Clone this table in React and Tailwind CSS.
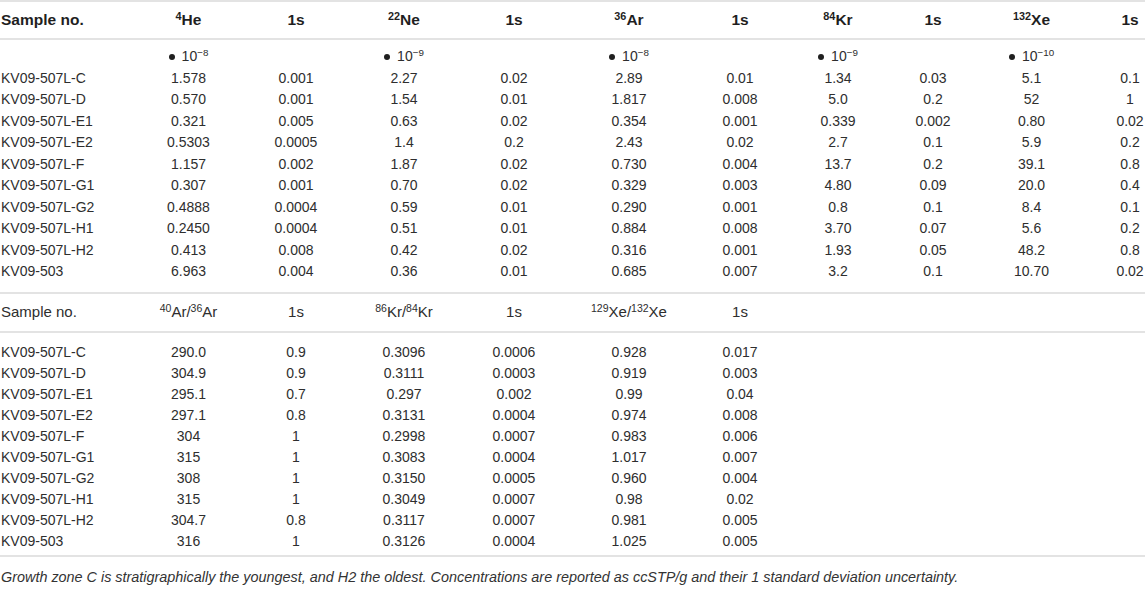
import React from 'react';

const grid = 'grid grid-cols-[135px_107px_108px_108px_112px_118px_104px_92px_98px_99px_98px]';

const gases = [
  { mass: '4', name: 'He', exp: '8' },
  { mass: '22', name: 'Ne', exp: '9' },
  { mass: '36', name: 'Ar', exp: '8' },
  { mass: '84', name: 'Kr', exp: '9' },
  { mass: '132', name: 'Xe', exp: '10' },
];

const concentrations = [
  ['KV09-507L-C', '1.578', '0.001', '2.27', '0.02', '2.89', '0.01', '1.34', '0.03', '5.1', '0.1'],
  ['KV09-507L-D', '0.570', '0.001', '1.54', '0.01', '1.817', '0.008', '5.0', '0.2', '52', '1'],
  ['KV09-507L-E1', '0.321', '0.005', '0.63', '0.02', '0.354', '0.001', '0.339', '0.002', '0.80', '0.02'],
  ['KV09-507L-E2', '0.5303', '0.0005', '1.4', '0.2', '2.43', '0.02', '2.7', '0.1', '5.9', '0.2'],
  ['KV09-507L-F', '1.157', '0.002', '1.87', '0.02', '0.730', '0.004', '13.7', '0.2', '39.1', '0.8'],
  ['KV09-507L-G1', '0.307', '0.001', '0.70', '0.02', '0.329', '0.003', '4.80', '0.09', '20.0', '0.4'],
  ['KV09-507L-G2', '0.4888', '0.0004', '0.59', '0.01', '0.290', '0.001', '0.8', '0.1', '8.4', '0.1'],
  ['KV09-507L-H1', '0.2450', '0.0004', '0.51', '0.01', '0.884', '0.008', '3.70', '0.07', '5.6', '0.2'],
  ['KV09-507L-H2', '0.413', '0.008', '0.42', '0.02', '0.316', '0.001', '1.93', '0.05', '48.2', '0.8'],
  ['KV09-503', '6.963', '0.004', '0.36', '0.01', '0.685', '0.007', '3.2', '0.1', '10.70', '0.02'],
];

const ratios = [
  ['KV09-507L-C', '290.0', '0.9', '0.3096', '0.0006', '0.928', '0.017'],
  ['KV09-507L-D', '304.9', '0.9', '0.3111', '0.0003', '0.919', '0.003'],
  ['KV09-507L-E1', '295.1', '0.7', '0.297', '0.002', '0.99', '0.04'],
  ['KV09-507L-E2', '297.1', '0.8', '0.3131', '0.0004', '0.974', '0.008'],
  ['KV09-507L-F', '304', '1', '0.2998', '0.0007', '0.983', '0.006'],
  ['KV09-507L-G1', '315', '1', '0.3083', '0.0004', '1.017', '0.007'],
  ['KV09-507L-G2', '308', '1', '0.3150', '0.0005', '0.960', '0.004'],
  ['KV09-507L-H1', '315', '1', '0.3049', '0.0007', '0.98', '0.02'],
  ['KV09-507L-H2', '304.7', '0.8', '0.3117', '0.0007', '0.981', '0.005'],
  ['KV09-503', '316', '1', '0.3126', '0.0004', '1.025', '0.005'],
];

// isotope label like ⁴He with a real superscript
function Iso({ mass, name }) {
  return (
    <span>
      <sup className="text-[0.7em] relative -top-[0.5em]">{mass}</sup>
      {name}
    </span>
  );
}

function DataRow({ cells, h }) {
  return (
    <div className={`${grid} ${h} items-center text-[14px]`}>
      {cells.map((c, i) => (
        <div key={i} className={i === 0 ? 'pl-px' : 'text-center'}>{c}</div>
      ))}
    </div>
  );
}

export default function App() {
  return (
    <div className="w-[1145px] h-[589px] overflow-hidden bg-white text-[#2e2e2e] font-['Liberation_Sans',Arial,sans-serif]">
      <div className="border-t-2 border-[#e3e3e3]" />

      {/* table 1 header */}
      <div className={`${grid} h-[36px] items-center text-[15.5px] font-bold text-[#1f1f1f]`}>
        <div className="pl-px">Sample no.</div>
        {gases.map(g => (
          <React.Fragment key={g.name}>
            <div className="text-center"><Iso mass={g.mass} name={g.name} /></div>
            <div className="text-center">1s</div>
          </React.Fragment>
        ))}
      </div>
      <div className="border-t-2 border-[#e3e3e3]" />

      <div className="pt-[6px] pb-[9px]">
        <div className={`${grid} h-[21.5px] items-center text-[14px]`}>
          <div />
          {gases.map(g => (
            <React.Fragment key={g.name}>
              <div className="text-center">
                <span className="inline-block w-[6px] h-[6px] rounded-full bg-[#1f1f1f] mr-[7px] align-middle relative -top-px" />
                10<sup className="text-[0.7em] relative -top-[0.55em]">−{g.exp}</sup>
              </div>
              <div />
            </React.Fragment>
          ))}
        </div>
        {concentrations.map(r => <DataRow key={r[0]} cells={r} h="h-[21.5px]" />)}
      </div>
      <div className="border-t-2 border-[#e3e3e3]" />

      {/* table 2 header */}
      <div className={`${grid} h-[37px] items-center text-[15px]`}>
        <div className="pl-px">Sample no.</div>
        <div className="text-center"><Iso mass="40" name="Ar" />/<Iso mass="36" name="Ar" /></div>
        <div className="text-center">1s</div>
        <div className="text-center"><Iso mass="86" name="Kr" />/<Iso mass="84" name="Kr" /></div>
        <div className="text-center">1s</div>
        <div className="text-center"><Iso mass="129" name="Xe" />/<Iso mass="132" name="Xe" /></div>
        <div className="text-center">1s</div>
      </div>
      <div className="border-t-2 border-[#e3e3e3]" />

      <div className="pt-[9px] pb-[3px]">
        {ratios.map(r => <DataRow key={r[0]} cells={r} h="h-[21px]" />)}
      </div>
      <div className="border-t-2 border-[#e3e3e3]" />

      <p className="pt-[12px] pl-px text-[14.4px] leading-[17px] italic text-[#333]">
        Growth zone C is stratigraphically the youngest, and H2 the oldest. Concentrations are reported as ccSTP/g and their 1 standard deviation uncertainty.
      </p>
    </div>
  );
}
